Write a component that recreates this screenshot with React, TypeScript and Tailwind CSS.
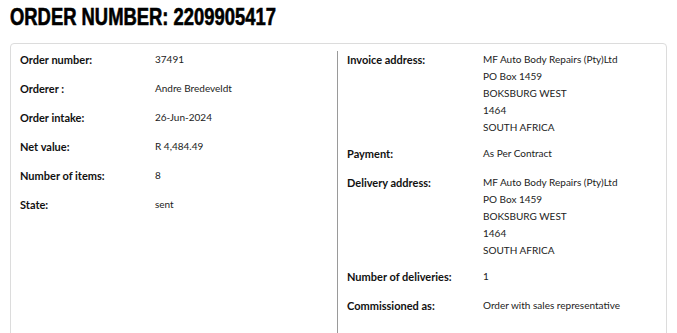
const leftRows: { label: string; value: string[] }[] = [
  { label: "Order number:", value: ["37491"] },
  { label: "Orderer :", value: ["Andre Bredeveldt"] },
  { label: "Order intake:", value: ["26-Jun-2024"] },
  { label: "Net value:", value: ["R 4,484.49"] },
  { label: "Number of items:", value: ["8"] },
  { label: "State:", value: ["sent"] },
];

const address = [
  "MF Auto Body Repairs (Pty)Ltd",
  "PO Box 1459",
  "BOKSBURG WEST",
  "1464",
  "SOUTH AFRICA",
];

const rightRows: { label: string; value: string[] }[] = [
  { label: "Invoice address:", value: address },
  { label: "Payment:", value: ["As Per Contract"] },
  { label: "Delivery address:", value: address },
  { label: "Number of deliveries:", value: ["1"] },
  { label: "Commissioned as:", value: ["Order with sales representative"] },
];

const DetailList = ({
  rows,
  labelWidth,
}: {
  rows: { label: string; value: string[] }[];
  labelWidth: string;
}) => (
  <div className="flex flex-col">
    {rows.map((row) => (
      <div
        key={row.label}
        className={`flex leading-[17px] ${row.value.length > 1 ? "mb-[9px]" : "mb-[12px]"}`}
      >
        <div className={`${labelWidth} shrink-0 text-[11px] font-bold text-[#111]`}>
          {row.label}
        </div>
        <div className="flex flex-col text-[10px] text-[#222]">
          {row.value.map((line, i) => (
            <span key={i}>{line}</span>
          ))}
        </div>
      </div>
    ))}
  </div>
);

export default function App() {
  return (
    <div className="min-h-screen bg-white px-[10px] pt-[3px] font-['Lato','Liberation_Sans',sans-serif]">
      <h1 className="font-['Liberation_Sans',sans-serif] text-[23px] font-bold leading-[28px] text-black">
        <span className="inline-block origin-left scale-x-[0.8] whitespace-nowrap [-webkit-text-stroke:0.6px_black]">
          ORDER NUMBER: 2209905417
        </span>
      </h1>
      <div className="mt-[12px] rounded-[4px] border border-[#dcdcdc] px-[9px] pt-[7px] pb-[40px]">
        <div className="flex">
          <div className="w-[317px] shrink-0">
            <DetailList rows={leftRows} labelWidth="w-[135px]" />
          </div>
          <div className="flex-1 border-l border-[#9a9a9a] pl-[9px] pb-[20px]">
            <DetailList rows={rightRows} labelWidth="w-[136px]" />
          </div>
        </div>
      </div>
    </div>
  );
}
